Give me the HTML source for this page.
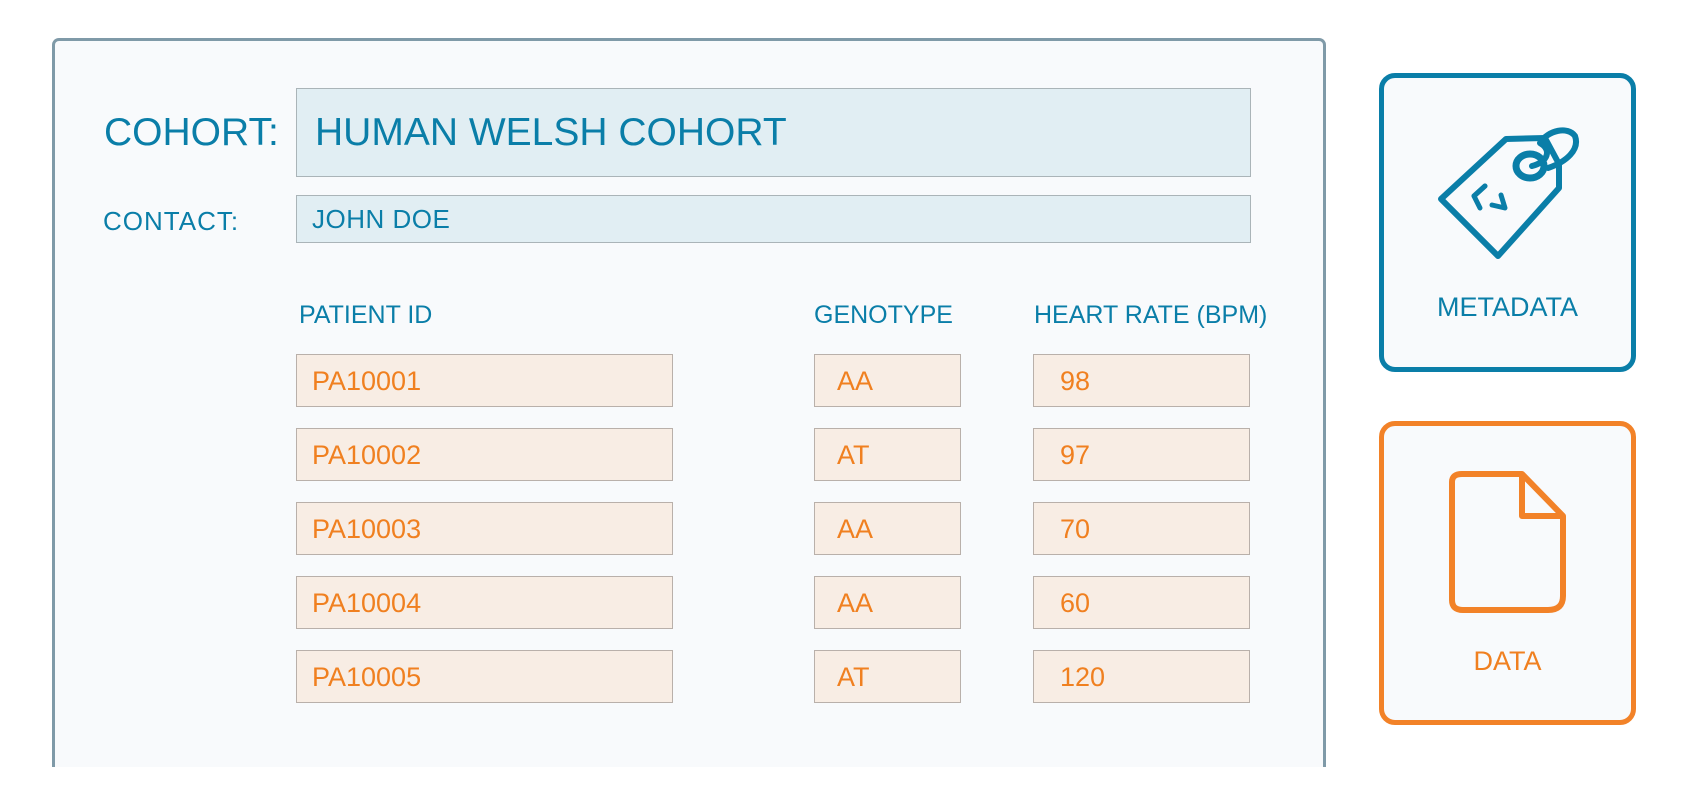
<!DOCTYPE html>
<html><head><meta charset="utf-8"><style>
body{margin:0;width:1698px;height:800px;background:#fff;position:relative;overflow:hidden;font-family:"Liberation Sans",sans-serif}
.a{position:absolute}
.panel{left:52px;top:38px;width:1268px;height:726px;border:3px solid #7f9aa8;border-bottom:none;border-radius:7px 7px 0 0;background:#f8fafc}
.blue{color:#0a7ea8}
.org{color:#f08020}
.ib{background:#e1eef3;border:1px solid #aab4b8;box-sizing:border-box}
.ob{background:#f8ede4;border:1px solid #b9b0aa;box-sizing:border-box;height:53px;font-size:27px;line-height:53px;color:#f08020}
.card{box-sizing:border-box;border:5px solid;border-radius:16px;background:#f8fafc}
</style></head><body>
<div class="a panel"></div>
<div class="a blue" style="left:104px;top:110px;font-size:39px;line-height:46px">COHORT:</div>
<div class="a ib blue" style="left:296px;top:88px;width:955px;height:89px;font-size:39px;line-height:87px;padding-left:18px">HUMAN WELSH COHORT</div>
<div class="a blue" style="left:103px;top:206px;font-size:26px;line-height:30px;letter-spacing:1px">CONTACT:</div>
<div class="a ib blue" style="left:296px;top:195px;width:955px;height:48px;font-size:26px;line-height:46px;padding-left:15px;letter-spacing:0.5px">JOHN DOE</div>
<div class="a blue" style="left:299px;top:301px;font-size:25px">PATIENT ID</div>
<div class="a blue" style="left:814px;top:301px;font-size:25px">GENOTYPE</div>
<div class="a blue" style="left:1034px;top:301px;font-size:25px">HEART RATE (BPM)</div>

<div class="a ob" style="left:296px;top:354px;width:377px;padding-left:15px">PA10001</div>
<div class="a ob" style="left:814px;top:354px;width:147px;padding-left:22px">AA</div>
<div class="a ob" style="left:1033px;top:354px;width:217px;padding-left:26px">98</div>
<div class="a ob" style="left:296px;top:428px;width:377px;padding-left:15px">PA10002</div>
<div class="a ob" style="left:814px;top:428px;width:147px;padding-left:22px">AT</div>
<div class="a ob" style="left:1033px;top:428px;width:217px;padding-left:26px">97</div>
<div class="a ob" style="left:296px;top:502px;width:377px;padding-left:15px">PA10003</div>
<div class="a ob" style="left:814px;top:502px;width:147px;padding-left:22px">AA</div>
<div class="a ob" style="left:1033px;top:502px;width:217px;padding-left:26px">70</div>
<div class="a ob" style="left:296px;top:576px;width:377px;padding-left:15px">PA10004</div>
<div class="a ob" style="left:814px;top:576px;width:147px;padding-left:22px">AA</div>
<div class="a ob" style="left:1033px;top:576px;width:217px;padding-left:26px">60</div>
<div class="a ob" style="left:296px;top:650px;width:377px;padding-left:15px">PA10005</div>
<div class="a ob" style="left:814px;top:650px;width:147px;padding-left:22px">AT</div>
<div class="a ob" style="left:1033px;top:650px;width:217px;padding-left:26px">120</div>

<div class="a card" style="left:1379px;top:73px;width:257px;height:299px;border-color:#0a7ea8"></div>
<div class="a blue" style="left:1379px;top:292px;width:257px;text-align:center;font-size:27px">METADATA</div>
<div class="a card" style="left:1379px;top:421px;width:257px;height:304px;border-color:#f28228"></div>
<div class="a org" style="left:1379px;top:646px;width:257px;text-align:center;font-size:27px">DATA</div>

<svg class="a" style="left:0;top:0" width="1698" height="800">
<g fill="none" stroke="#0a7ea8" stroke-width="6" stroke-linejoin="round" stroke-linecap="round">
<path d="M1441 199 L1506 139 L1545 138 L1559 164 L1559 188 L1498 256 Z"/>
<ellipse cx="1530" cy="166" rx="14" ry="12" stroke-width="7"/>
<path d="M1532 166 C1548 162 1552 150 1540 143 C1548 130 1568 126 1575 136 C1580 150 1566 162 1548 168"/>
<path d="M1485 186 L1474 196 L1480 208" stroke-width="5"/>
<path d="M1492 205 L1505 208 L1501 195" stroke-width="5"/>
<path d="M1474 196 L1485 186 M1505 208" stroke-width="5"/>
</g>
<path d="M1452 482 Q1452 474 1462 474 L1522 474 L1563 516 L1563 596 Q1563 610 1548 610 L1463 610 Q1452 610 1452 600 Z M1522 474 L1522 516 L1563 516" fill="none" stroke="#f28228" stroke-width="6" stroke-linejoin="round"/>
</svg>
</body></html>
